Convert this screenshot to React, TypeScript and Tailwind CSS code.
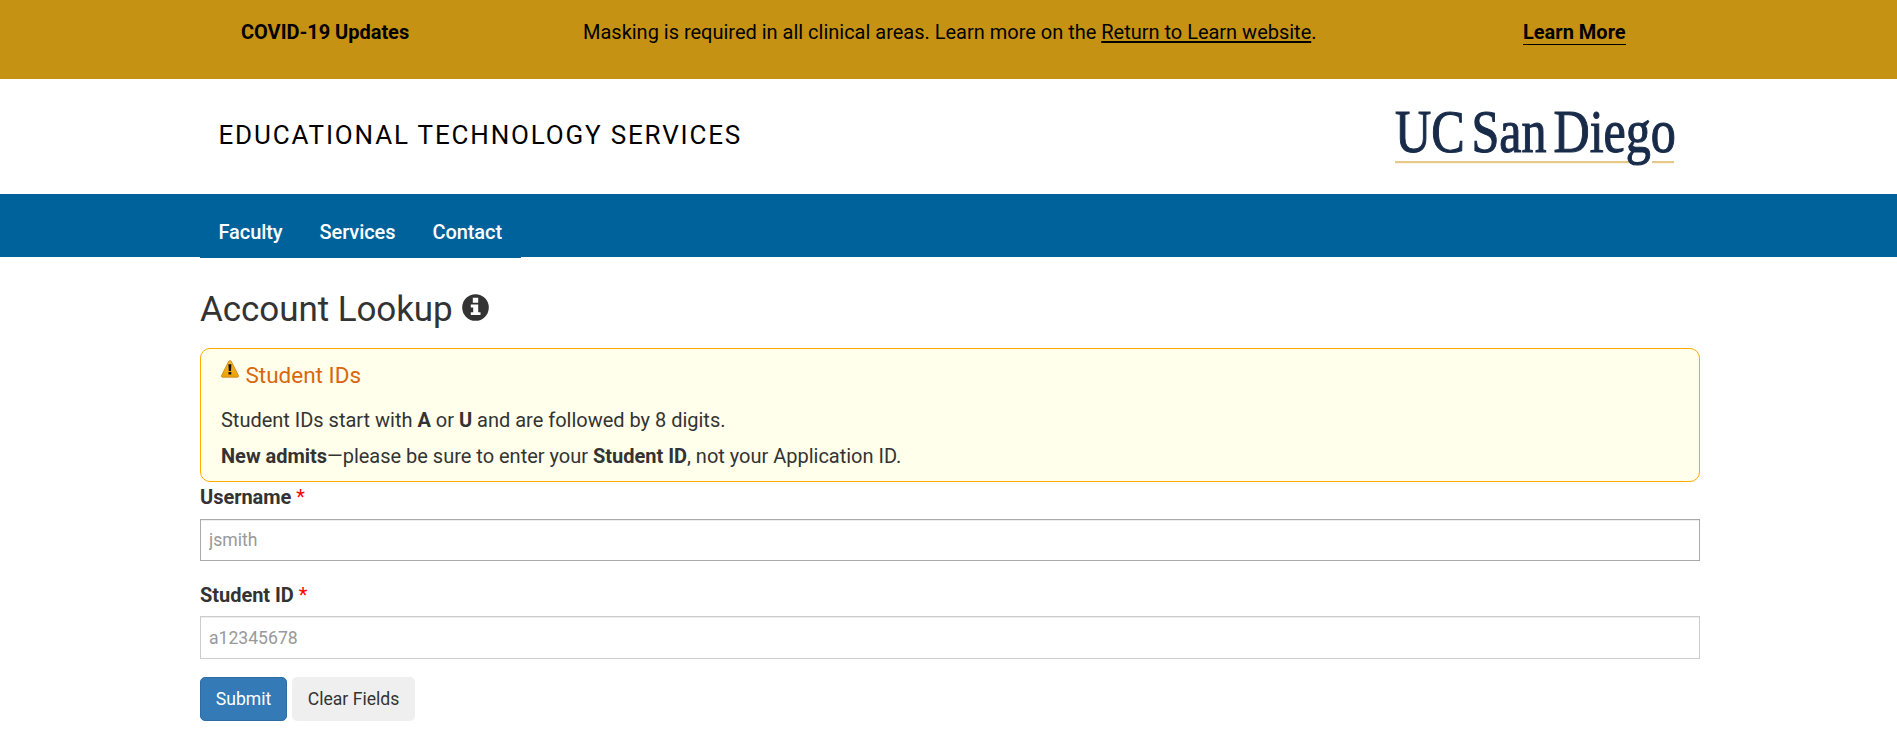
import React from "react";

const navItems = ["Faculty", "Services", "Contact"];

function Banner() {
  return (
    <div className="flex h-[79px] items-start bg-[#c69214] pt-[17px] text-[20px] leading-[30px] text-black">
      <strong className="ml-[241px] w-[342px] font-bold tracking-[-0.03px]">COVID-19 Updates</strong>
      <p className="w-[940px] tracking-[-0.01px]">
        Masking is required in all clinical areas. Learn more on the{" "}
        <a className="underline decoration-2 underline-offset-2">Return to Learn website</a>.
      </p>
      <a className="h-[28px] border-b border-black font-bold">Learn More</a>
    </div>
  );
}

function Logo() {
  return (
    <svg width="300" height="76" viewBox="0 -16 300 76" fill="#182b49">
      <rect x="0" y="50" width="234" height="2.2" fill="#e6c888" />
      <rect x="257" y="50" width="22" height="2.2" fill="#e6c888" />
      <text
        transform="scale(.828 1)"
        x="0"
        y="41.3"
        fontFamily="'Liberation Serif', serif"
        fontSize="60.5"
        wordSpacing="-6.8"
        stroke="#182b49"
        strokeWidth="1.1"
      >
        UC San Diego
      </text>
    </svg>
  );
}

function InfoIcon() {
  return (
    <svg width="27" height="27" viewBox="0 0 27 27" className="mt-[5px]">
      <circle cx="13.5" cy="13.5" r="13.3" fill="#333" />
      <path fill="#fff" d="M10.8 3.7h5.4v5h-5.4zM8.8 10.6h7.4v7.6h2.3v2.8H8.8v-2.8h2.4v-4.7H8.8z" />
    </svg>
  );
}

function WarningIcon() {
  return (
    <svg width="18" height="18" viewBox="0 0 18 18" className="mt-[11px]">
      <defs>
        <linearGradient id="warn" x1="0" y1="0" x2="0" y2="1">
          <stop offset="0" stopColor="#f5b62e" />
          <stop offset="1" stopColor="#eda006" />
        </linearGradient>
      </defs>
      <path d="M7.7 1.2Q9 0 10.2 1.2L17.5 15.6Q17.8 17 16.8 17.2H1.2Q0 17 .5 15.6Z" fill="url(#warn)" stroke="#c98219" strokeWidth=".8" />
      <path d="M7.4 4.3h3l-.4 6.6H7.8zM7.5 12h2.8v2.6H7.5z" fill="#111" />
    </svg>
  );
}

function Field({ label, placeholder, className }: { label: string; placeholder: string; className: string }) {
  return (
    <label className="block">
      <span className="block pt-[1px] text-[20px] leading-[28px] font-bold tracking-[-0.04px]">
        {label} <span className="font-normal text-[#f00]">*</span>
      </span>
      <input
        className={`block w-full border bg-white px-[8px] text-[17.6px] shadow-[inset_0_1px_1px_rgba(0,0,0,0.075)] outline-none placeholder:text-[#999] ${className}`}
        placeholder={placeholder}
      />
    </label>
  );
}

export default function App() {
  return (
    <div className="h-[742px] overflow-hidden bg-white font-['Roboto',sans-serif] text-[#333]">
      <Banner />
      <header className="flex h-[115px] justify-between pr-[202px] pl-[218.5px]">
        <div className="pt-[38px] text-[26px] leading-[36px] tracking-[1.83px] text-black">EDUCATIONAL TECHNOLOGY SERVICES</div>
        <div className="pt-[16px]">
          <Logo />
        </div>
      </header>
      <nav className="h-[63px] bg-[#00629b] pl-[200px]">
        <ul className="flex h-[64px] w-[321px] gap-[37px] bg-[#00629b] pt-[23px] pl-[18.5px] text-[20px] leading-[30px] font-medium tracking-[-0.08px] text-white">
          {navItems.map((item) => (
            <li key={item}>{item}</li>
          ))}
        </ul>
      </nav>
      <main className="ml-[200px] w-[1500px]">
        <h1 className="flex h-[91px] gap-[9.5px] pt-[32px] text-[35px] leading-[42px] tracking-[-0.07px]">
          Account Lookup
          <InfoIcon />
        </h1>
        <section className="h-[134px] rounded-[10px] border border-[#fa0] bg-[#ffffec] px-[20px] text-[20px] leading-[36px] tracking-[-0.01px]">
          <h2 className="flex h-[53px] gap-[6.5px] text-[22.5px] text-[#d9670d]">
            <WarningIcon />
            <span className="pt-[8px]">Student IDs</span>
          </h2>
          <p>
            Student IDs start with <b>A</b> or <b>U</b> and are followed by 8 digits.
          </p>
          <p>
            <b>New admits</b>—please be sure to enter your <b>Student ID</b>, not your Application ID.
          </p>
        </section>
        <form className="flex flex-col">
          <Field label="Username" placeholder="jsmith" className="mt-[8px] h-[42px] border-[#aaa]" />
          <div className="h-[19px]" />
          <Field label="Student ID" placeholder="a12345678" className="mt-[7px] h-[43px] border-[#ccc]" />
          <div className="mt-[18px] flex gap-[5px] text-[17.6px]">
            <button type="button" className="h-[44px] w-[87px] rounded-[5px] border border-[#2e6da4] bg-[#337ab7] text-white">Submit</button>
            <button type="button" className="h-[44px] w-[123px] rounded-[5px] bg-[#efefef]">Clear Fields</button>
          </div>
        </form>
      </main>
    </div>
  );
}
